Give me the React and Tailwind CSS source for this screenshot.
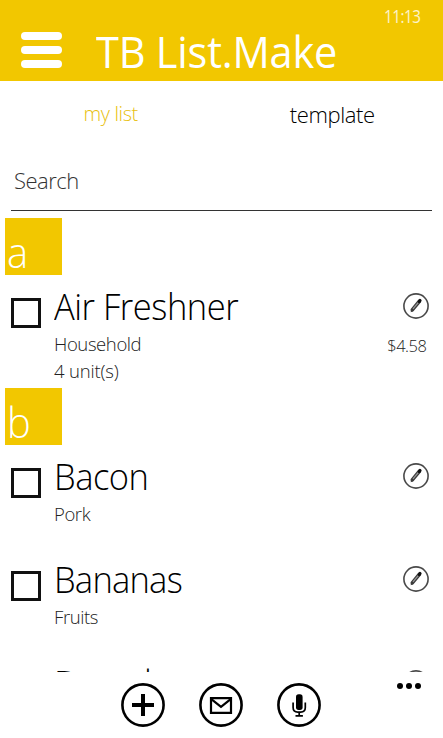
import { useState } from 'react'

const groups = [
  {
    letter: 'a',
    items: [
      { name: 'Air Freshner', category: 'Household', units: '4 unit(s)', price: '$4.58', track: 'tracking-[-0.5px]', height: 'h-[113px]' }
    ]
  },
  {
    letter: 'b',
    items: [
      { name: 'Bacon', category: 'Pork', track: 'tracking-[-0.5px]', height: 'h-[103px]' },
      { name: 'Bananas', category: 'Fruits', track: 'tracking-[-0.8px]', height: 'h-[104px]' },
      { name: 'Bread', track: 'tracking-[1.3px]', height: 'h-[103px]' }
    ]
  }
]

function EditIcon() {
  return (
    <svg className="block h-[28px] w-[28px]" viewBox="0 0 28 28" fill="none">
      <circle cx="14" cy="14" r="12.1" stroke="#4a4a4a" strokeWidth="1.6" />
      <path d="M10.3 17.8 17.2 9.5" stroke="#3c3c3c" strokeWidth="3.6" strokeLinecap="round" />
      <path d="M11 16.9 16.2 10.7" stroke="#999" strokeWidth="1.2" />
      <path d="m17.3 9.4.7-.9" stroke="#111" strokeWidth="3.2" strokeLinecap="round" />
      <path d="m8.7 20.2.4-3.2 2.2 1.9z" fill="#3c3c3c" />
    </svg>
  )
}

function AppBarButton({ label, children }) {
  return (
    <button aria-label={label}>
      <svg className="block h-[46px] w-[46px]" viewBox="0 0 46 46" fill="none">
        <circle cx="23" cy="23" r="20.6" stroke="#000" strokeWidth="2.6" />
        {children}
      </svg>
    </button>
  )
}

function Item({ item, checked, onToggle }) {
  return (
    <div className={`flex shrink-0 pl-[11px] ${item.height}`}>
      <button
        aria-label={item.name}
        onClick={onToggle}
        className={`mt-[23px] h-[30px] w-[30px] shrink-0 border-3 border-[#111] ${checked ? 'bg-[#f2c700]' : ''}`}
      />
      <div className="ml-[13px] flex-1 pt-2 whitespace-nowrap">
        <div className={`origin-left scale-x-[0.945] text-[36.5px] leading-[46px] font-light text-black ${item.track}`}>
          {item.name}
        </div>
        {item.category && (
          <div className="pt-px text-[18.5px] leading-[27px] font-light tracking-[-0.4px] text-[#222]">{item.category}</div>
        )}
        {item.units && (
          <div className="text-[18.5px] leading-[27px] font-light tracking-[-0.2px] text-[#222]">{item.units}</div>
        )}
      </div>
      <div className="flex flex-col items-end pt-[17px] pr-[13px]">
        <EditIcon />
        {item.price && (
          <div className="mt-[12px] mr-[4px] origin-right scale-x-[0.97] text-[17px] leading-[27px] font-light tracking-[-0.5px] text-[#222]">
            {item.price}
          </div>
        )}
      </div>
    </div>
  )
}

export default function App() {
  const [checked, setChecked] = useState({})

  const toggle = (name) => setChecked({ ...checked, [name]: !checked[name] })

  return (
    <div className="flex h-[738px] w-[443px] flex-col overflow-hidden bg-white font-['Open_Sans',sans-serif]">
      {/* Header */}
      <header className="flex h-[81px] shrink-0 bg-[#f2c700] text-white">
        <button aria-label="Menu" className="mt-[32px] ml-[21px] flex w-[41px] flex-col gap-[6px]">
          <span className="h-[8px] rounded-full bg-white" />
          <span className="h-[8px] rounded-full bg-white" />
          <span className="h-[8px] rounded-full bg-white" />
        </button>
        <h1 className="mt-[23px] ml-[34px] origin-left scale-x-[0.965] text-[43px] leading-[58px] tracking-[-0.2px] whitespace-nowrap">
          TB List.Make
        </h1>
        <span className="mt-[4px] mr-[23px] ml-auto origin-right scale-x-[0.84] text-[18px] leading-6 tracking-[-0.5px] text-white/80">
          11:13
        </span>
      </header>

      {/* Tabs */}
      <nav className="grid h-[69px] shrink-0 grid-cols-2 font-light">
        <button className="self-start pt-[18px] text-[20px] leading-[30px] tracking-[-0.4px] text-[#e8bf10]">my list</button>
        <button className="self-start pt-[17px] text-[22px] leading-[32px] tracking-[-0.4px] text-black">template</button>
      </nav>

      {/* Search */}
      <div className="mx-[11px] h-[61px] shrink-0 border-b border-[#333] pt-[14px] pl-[3px]">
        <input
          placeholder="Search"
          className="block h-[32px] w-full text-[22px] leading-[32px] font-light tracking-[-0.5px] outline-none placeholder:text-[#333]"
        />
      </div>

      {/* List */}
      <main className="flex flex-1 flex-col overflow-hidden pt-[7px]">
        {groups.map(group => (
          <section key={group.letter} className="shrink-0">
            <h2 className="ml-[5px] h-[57px] w-[57px] bg-[#f2c700] pt-[10px] pl-[2px] text-white">
              <span className="block origin-left scale-x-[0.93] text-[43px] leading-[48px] font-[350]">{group.letter}</span>
            </h2>
            {group.items.map(item => (
              <Item
                key={item.name}
                item={item}
                checked={checked[item.name]}
                onToggle={() => toggle(item.name)}
              />
            ))}
          </section>
        ))}
      </main>

      {/* App bar */}
      <footer className="flex h-[66px] shrink-0 items-start bg-white">
        <div className="mt-[10px] ml-[120px] flex gap-[32px]">
          <AppBarButton label="Add">
            <path d="M23 12v22M12 23h22" stroke="#000" strokeWidth="4" />
          </AppBarButton>
          <AppBarButton label="Mail">
            <path d="M13 16.2h20v14.6H13z" stroke="#000" strokeWidth="2.2" />
            <path d="m13 16.8 10 8 10-8" stroke="#000" strokeWidth="2.2" />
          </AppBarButton>
          <AppBarButton label="Voice">
            <rect x="20" y="12.3" width="6.6" height="15.6" rx="2.6" fill="#000" />
            <path d="M17.1 20.5v5q0 4.6 4.6 4.6h3q4.6 0 4.6-4.6v-5M23.2 30v3.6M19.5 33.8h7.4" stroke="#000" strokeWidth="1.7" />
          </AppBarButton>
        </div>
        <button aria-label="More" className="mt-[11px] mr-[22px] ml-auto flex gap-[3px]">
          <span className="h-[6px] w-[6px] rounded-full bg-black" />
          <span className="h-[6px] w-[6px] rounded-full bg-black" />
          <span className="h-[6px] w-[6px] rounded-full bg-black" />
        </button>
      </footer>
    </div>
  )
}
